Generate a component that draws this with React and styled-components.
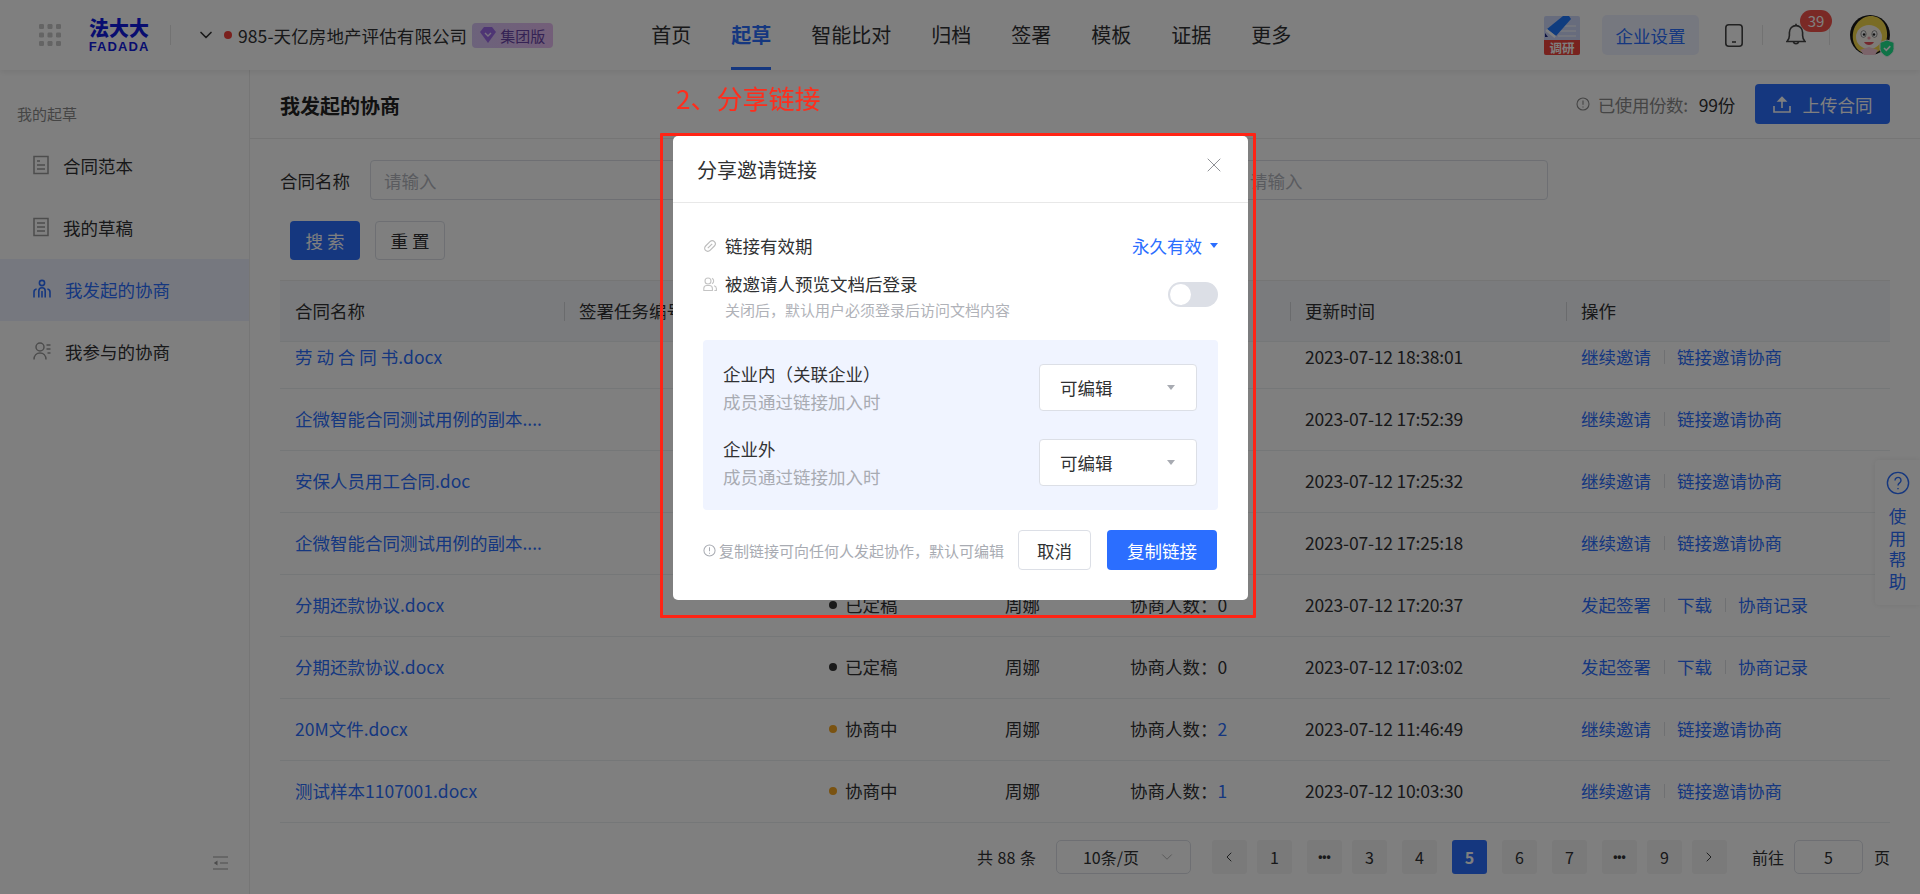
import React from "react";
import styled, { createGlobalStyle } from "styled-components";
import { ChevronDown, ChevronLeft, ChevronRight, X } from "lucide-react";

const FONT = `"Noto Sans CJK SC", "Noto Sans", sans-serif`;
const BLUE = "#2b6eff";

const GlobalStyle = createGlobalStyle`
  html, body {
    margin: 0;
    height: 100%;
    overflow: hidden;
    background: #fff;
    font-family: ${FONT};
    font-size: 17.5px;
    color: #303133;
  }
  #root { height: 100%; }
  * { box-sizing: border-box; }
`;

const Page = styled.div`
  width: 1920px;
  height: 894px;
  display: flex;
  flex-direction: column;
`;

/* top bar */
const TopBar = styled.header`
  height: 70px;
  flex: none;
  display: flex;
  align-items: center;
  padding-right: 30px;
  background: #fff;
  box-shadow: 0 2px 6px rgba(0, 0, 0, 0.08);
  position: relative;
  z-index: 1;
`;

const AppsIcon = styled.svg`
  width: 22px;
  height: 22px;
  margin-left: 39px;
  flex: none;
`;

const Logo = styled.div`
  margin-left: 28px;
  width: 60px;
  flex: none;
  display: flex;
  flex-direction: column;
  align-items: center;
  color: #111be0;
  font-weight: 900;
`;

const LogoCn = styled.span`
  font-size: 20px;
  line-height: 20px;
`;

const LogoEn = styled.span`
  margin-top: 3px;
  font-family: "Liberation Sans", sans-serif;
  font-size: 13px;
  line-height: 11px;
  font-weight: 700;
  letter-spacing: 1.1px;
  white-space: nowrap;
`;

const BarSep = styled.i`
  width: 1px;
  height: 20px;
  background: #e4e4e4;
  flex: none;
  margin-left: ${(p) => p.$ml || 0}px;
`;

const CompanyToggle = styled.span`
  margin-left: 25px;
  display: flex;
  color: #333;
`;

const CompanyDot = styled.i`
  width: 8px;
  height: 8px;
  border-radius: 50%;
  background: #f5403a;
  margin-left: 8px;
  flex: none;
`;

const CompanyName = styled.span`
  margin-left: 6px;
  white-space: nowrap;
  letter-spacing: 0.1px;
`;

const GroupBadge = styled.span`
  margin-left: 5px;
  width: 81px;
  height: 25px;
  flex: none;
  display: flex;
  align-items: center;
  justify-content: center;
  gap: 4px;
  border-radius: 4px;
  background: linear-gradient(90deg, #d9c6f7, #e7bdf2);
  color: #6a45a8;
  font-size: 15px;
`;

const Nav = styled.nav`
  margin-left: 98px;
  height: 70px;
  display: flex;
  gap: 40px;
`;

const NavItem = styled.a`
  display: flex;
  align-items: center;
  padding-top: 2px;
  font-size: 20px;
  border-bottom: 3px solid ${(p) => (p.$active ? BLUE : "transparent")};
  color: ${(p) => (p.$active ? BLUE : "#303133")};
  font-weight: ${(p) => (p.$active ? 700 : 400)};
`;

const BarRight = styled.div`
  margin-left: auto;
  display: flex;
  align-items: center;
`;

const SurveyBadge = styled.div`
  width: 36px;
  height: 39px;
  border-radius: 2px;
  overflow: hidden;
  display: flex;
  flex-direction: column;
  background: #cfd8fb;
`;

const SurveyLabel = styled.span`
  height: 15px;
  background: #f0453c;
  color: #fff;
  font-size: 12.5px;
  line-height: 15px;
  font-weight: 700;
  text-align: center;
  white-space: nowrap;
`;

const SettingsButton = styled.a`
  margin-left: 22px;
  width: 97px;
  height: 40px;
  display: flex;
  align-items: center;
  justify-content: center;
  border-radius: 5px;
  background: #edf1ff;
  color: ${BLUE};
`;

const BarIcon = styled.svg`
  flex: none;
  margin-left: ${(p) => p.$ml || 0}px;
`;

const BellWrap = styled.div`
  position: relative;
  display: flex;
  margin-left: 23px;
`;

const BellCount = styled.span`
  position: absolute;
  left: 14px;
  top: -13px;
  width: 32px;
  height: 22px;
  border-radius: 11px;
  background: #f5524a;
  color: #fff;
  font-size: 15px;
  line-height: 22px;
  text-align: center;
`;

const AvatarIcon = styled.svg`
  margin-left: 20px;
  flex: none;
  overflow: visible;
`;

/* page body */
const Body = styled.div`
  flex: 1;
  min-height: 0;
  display: flex;
`;

const Sidebar = styled.aside`
  width: 250px;
  flex: none;
  display: flex;
  flex-direction: column;
  border-right: 1px solid #ececec;
  padding: 34px 0 24px;
`;

const SideLabel = styled.div`
  padding-left: 17px;
  margin-bottom: 11px;
  font-size: 15px;
  line-height: 20px;
  color: #8a8a8a;
`;

const SideItem = styled.a`
  height: 62px;
  display: flex;
  align-items: center;
  gap: 14px;
  padding: 0 0 2px 33px;
  background: ${(p) => (p.$active ? "#edf1ff" : "transparent")};
  color: ${(p) => (p.$active ? BLUE : "#303133")};
`;

const CollapseIcon = styled.svg`
  margin-top: auto;
  margin-left: 213px;
`;

const Main = styled.main`
  flex: 1;
  min-width: 0;
  display: flex;
  flex-direction: column;
`;

const MainHead = styled.div`
  height: 69px;
  flex: none;
  display: flex;
  align-items: center;
  justify-content: space-between;
  padding: 0 30px;
  border-bottom: 1px solid #ebebeb;
`;

const MainTitle = styled.h1`
  margin: 2px 0 0;
  font-size: 20px;
  font-weight: 700;
  color: #222;
`;

const HeadRight = styled.div`
  display: flex;
  align-items: center;
`;

const QuotaLabel = styled.span`
  margin-left: 8px;
  color: #8a8a8a;
  letter-spacing: -0.4px;
`;

const QuotaValue = styled.span`
  margin-left: 11px;
  margin-right: 20px;
  letter-spacing: -0.2px;
`;

const PrimaryButton = styled.button`
  height: ${(p) => p.$h || 40}px;
  width: ${(p) => p.$w}px;
  display: flex;
  align-items: center;
  justify-content: center;
  gap: 12px;
  padding: 0;
  border: 0;
  border-radius: 4px;
  background: ${BLUE};
  color: #fff;
  font: inherit;
`;

const GhostButton = styled.button`
  height: ${(p) => p.$h || 40}px;
  width: ${(p) => p.$w}px;
  padding: 0;
  border: 1px solid #dcdfe6;
  border-radius: 4px;
  background: #fff;
  color: #303133;
  font: inherit;
`;

const Filters = styled.div`
  padding: 21px 30px 0;
  flex: none;
`;

const FilterRow = styled.div`
  width: 1268px;
  display: flex;
  justify-content: space-between;
`;

const FilterField = styled.div`
  width: ${(p) => p.$w}px;
  display: flex;
  align-items: center;
`;

const FilterLabel = styled.span`
  width: 90px;
  flex: none;
  white-space: nowrap;
`;

const TextBox = styled.div`
  flex: 1;
  height: 40px;
  display: flex;
  align-items: center;
  padding-left: 13px;
  border: 1px solid #dcdfe6;
  border-radius: 4px;
  color: #b4b7be;
`;

const FilterActions = styled.div`
  display: flex;
  gap: 15px;
  margin-top: 21px;
  padding-left: 10px;
`;

const TableWrap = styled.div`
  margin: 20px 30px 0;
  flex: none;
  border-top: 1px solid #ebebeb;
`;

const COLUMNS = "284px 250px 176px 125px 175px 276px 324px";

const TableHead = styled.div`
  height: 61px;
  display: grid;
  grid-template-columns: ${COLUMNS};
  align-items: center;
  background: #f5f7fa;
  border-bottom: 1px solid #ebeef0;
`;

const HeadCell = styled.div`
  position: relative;
  padding: 0 0 2px 15px;
  white-space: nowrap;
  overflow: hidden;
  ${(p) =>
    p.$sep &&
    `&::before {
      content: "";
      position: absolute;
      left: 0;
      top: 4px;
      bottom: 4px;
      width: 1px;
      background: #d5d7da;
    }`}
`;

const TableBody = styled.div`
  height: 481px;
  overflow: hidden;
`;

const TableRows = styled.div`
  margin-top: -15px;
`;

const TableRow = styled.div`
  height: 62px;
  display: grid;
  grid-template-columns: ${COLUMNS};
  align-items: center;
  border-bottom: 1px solid #ebeef0;
`;

const Cell = styled.div`
  padding: 0 0 2px 15px;
  display: flex;
  align-items: center;
  white-space: nowrap;
`;

const TimeCell = styled(Cell)`
  letter-spacing: -0.2px;
`;

const FileLink = styled.a`
  color: ${BLUE};
`;

const StatusDot = styled.i`
  width: 8px;
  height: 8px;
  border-radius: 50%;
  margin-right: 8px;
  background: ${(p) => (p.$ongoing ? "#f5a623" : "#333")};
`;

const CountNumber = styled.span`
  color: ${(p) => (p.$link ? BLUE : "inherit")};
`;

const ActionLink = styled.a`
  color: ${BLUE};
`;

const ActionSep = styled.i`
  width: 1px;
  height: 14px;
  margin: 0 12px 0 13px;
  background: #dfe1e4;
`;

/* pagination */
const Pager = styled.div`
  padding: 17px 30px 0;
  display: flex;
  align-items: center;
  justify-content: flex-end;
  font-size: 16px;
`;

const PagerTotal = styled.span`
  margin-right: 20px;
  word-spacing: 1px;
`;

const SizeSelect = styled.div`
  width: 135px;
  height: 34px;
  margin-right: 21px;
  display: flex;
  align-items: center;
  justify-content: space-between;
  padding: 0 14px 0 26px;
  border: 1px solid #dcdfe6;
  border-radius: 5px;
`;

const PageButton = styled.span`
  width: 35px;
  height: 34px;
  flex: none;
  margin-left: ${(p) => p.$ml ?? 10}px;
  display: flex;
  align-items: center;
  justify-content: center;
  border-radius: 3px;
  background: ${(p) => (p.$active ? BLUE : "#f4f4f5")};
  color: ${(p) => (p.$active ? "#fff" : "#303133")};
  font-weight: ${(p) => (p.$active ? 700 : 400)};
`;

const Dots = styled.span`
  font-family: "Liberation Sans", sans-serif;
  font-size: 12px;
  font-weight: 700;
`;

const JumpLabel = styled.span`
  margin-left: 25px;
`;

const JumpBox = styled.div`
  width: 69px;
  height: 34px;
  margin: 0 11px 0 10px;
  display: flex;
  align-items: center;
  justify-content: center;
  border: 1px solid #dcdfe6;
  border-radius: 5px;
`;

/* floating help */
const HelpTab = styled.div`
  position: absolute;
  right: 0;
  top: 460px;
  width: 45px;
  height: 145px;
  display: flex;
  flex-direction: column;
  align-items: center;
  padding-top: 11px;
  border-radius: 4px 0 0 4px;
  background: #fff;
  box-shadow: 0 0 6px rgba(0, 0, 0, 0.08);
  color: ${BLUE};
  font-size: 17.5px;
`;

const HelpText = styled.div`
  width: 18px;
  margin-top: 10px;
  line-height: 21.6px;
  text-align: center;
`;

/* dialog */
const Overlay = styled.div`
  position: fixed;
  inset: 0;
  background: rgba(0, 0, 0, 0.5);
  z-index: 10;
`;

const Annotation = styled.div`
  position: absolute;
  left: 676px;
  top: 80px;
  font-size: 26px;
  line-height: 36px;
  color: #ff2d1c;
  white-space: nowrap;
`;

const AnnotationFrame = styled.div`
  position: absolute;
  left: 660px;
  top: 133px;
  width: 596px;
  height: 485px;
  border: 3px solid #ff2415;
  border-radius: 1px;
`;

const Dialog = styled.div`
  position: absolute;
  left: 673px;
  top: 136px;
  width: 575px;
  height: 464px;
  border-radius: 5px;
  background: #fff;
`;

const DialogHead = styled.div`
  height: 67px;
  display: flex;
  align-items: center;
  justify-content: space-between;
  padding: 0 22px 0 24px;
  border-bottom: 1px solid #e8e8e8;
`;

const DialogTitle = styled.span`
  font-size: 20px;
  color: #303133;
`;

const CloseIcon = styled(X)`
  margin-bottom: 8px;
`;

const DialogBody = styled.div`
  padding: 30px 30px 0;
`;

const OptionRow = styled.div`
  display: flex;
  align-items: ${(p) => (p.$top ? "flex-start" : "center")};
  justify-content: space-between;
  min-height: 24px;
  margin-top: ${(p) => p.$mt || 0}px;
`;

const OptionLabel = styled.div`
  display: flex;
  align-items: center;
  gap: 8px;
  line-height: 24px;
`;

const OptionHint = styled.div`
  padding-left: 22px;
  margin-top: 3px;
  font-size: 15px;
  line-height: 22px;
  color: #b0b2b8;
`;

const ExpirySelect = styled.span`
  display: flex;
  align-items: center;
  gap: 8px;
  color: ${BLUE};
`;

const SmallCaret = styled.i`
  width: 0;
  height: 0;
  border-left: 4.5px solid transparent;
  border-right: 4.5px solid transparent;
  border-top: 5px solid ${(p) => p.$color};
`;

const Switch = styled.span`
  width: 50px;
  height: 25px;
  margin-top: 10px;
  padding: 2px;
  border-radius: 13px;
  background: #dcdfe6;
  display: flex;
`;

const SwitchKnob = styled.i`
  width: 21px;
  height: 21px;
  border-radius: 50%;
  background: #fff;
`;

const RolePanel = styled.div`
  margin-top: 19px;
  padding: 24px 21px 24px 20px;
  display: flex;
  flex-direction: column;
  gap: 28px;
  border-radius: 4px;
  background: #f0f4ff;
`;

const RoleRow = styled.div`
  height: 47px;
  display: flex;
  align-items: center;
  justify-content: space-between;
`;

const RoleText = styled.div`
  line-height: 24px;
`;

const RoleHint = styled.div`
  margin-top: 4px;
  color: #a8abb2;
`;

const RoleSelect = styled.div`
  width: 158px;
  height: 47px;
  display: flex;
  align-items: center;
  justify-content: space-between;
  padding: 0 21px 0 20px;
  border: 1px solid #dcdfe6;
  border-radius: 4px;
  background: #fff;
`;

const DialogFoot = styled.div`
  margin-top: 20px;
  padding-right: 1px;
  display: flex;
  align-items: center;
`;

const FootHint = styled.div`
  flex: 1;
  display: flex;
  align-items: center;
  gap: 3px;
  font-size: 15px;
  color: #a8abb2;
  white-space: nowrap;
`;

const FootActions = styled.div`
  display: flex;
  gap: 16px;
`;

const rows = [
  { name: "劳 动 合 同 书.docx", time: "2023-07-12 18:38:01" },
  { name: "企微智能合同测试用例的副本....", time: "2023-07-12 17:52:39" },
  { name: "安保人员用工合同.doc", time: "2023-07-12 17:25:32" },
  { name: "企微智能合同测试用例的副本....", time: "2023-07-12 17:25:18" },
  { name: "分期还款协议.docx", state: "已定稿", count: 0, time: "2023-07-12 17:20:37" },
  { name: "分期还款协议.docx", state: "已定稿", count: 0, time: "2023-07-12 17:03:02" },
  { name: "20M文件.docx", state: "协商中", count: 2, time: "2023-07-12 11:46:49" },
  { name: "测试样本1107001.docx", state: "协商中", count: 1, time: "2023-07-12 10:03:30" },
];

const navItems = ["首页", "起草", "智能比对", "归档", "签署", "模板", "证据", "更多"];

function DocIcon({ lines = 3 }) {
  return (
    <svg width="16" height="20" viewBox="0 0 16 20" fill="none" stroke="#9a9a9a" strokeWidth="1.5">
      <rect x="1" y="1.5" width="14" height="17" />
      <path d={lines === 3 ? "M4 6h3M4 10h8M4 14h8" : "M4 6h8M4 10h8M4 14h8"} />
    </svg>
  );
}

function GroupIcon() {
  return (
    <svg width="18" height="20" viewBox="0 0 18 20" fill="none" stroke={BLUE} strokeWidth="1.6">
      <circle cx="9" cy="4" r="2.6" />
      <path d="M5.8 18.5v-6.5a3.2 3.2 0 0 1 6.4 0v6.5" />
      <path d="M1 18.5v-5.5a3 3 0 0 1 2.6-3M17 18.5v-5.5a3 3 0 0 0-2.6-3" />
      <path d="M9 12v6.5" />
    </svg>
  );
}

function PartnerIcon() {
  return (
    <svg width="18" height="20" viewBox="0 0 18 20" fill="none" stroke="#9a9a9a" strokeWidth="1.5">
      <circle cx="7" cy="6" r="4" />
      <path d="M1 18.5c0-4 2.6-6.5 6-6.5s6 2.5 6 6.5" />
      <path d="M13.5 4h4M13.5 8h4M14.5 12h3" />
    </svg>
  );
}

function LinkIcon() {
  return (
    <svg width="14" height="14" viewBox="0 0 14 14" fill="none" stroke="#bdbdbd" strokeWidth="1.2">
      <rect x="0.8" y="3.9" width="12.4" height="6.2" rx="3.1" transform="rotate(-45 7 7)" />
      <path d="M4.8 9.2l4.4-4.4" />
    </svg>
  );
}

function UsersIcon() {
  return (
    <svg width="14" height="16" viewBox="0 0 14 16" fill="none" stroke="#c4c4c4" strokeWidth="1.1">
      <circle cx="5" cy="5" r="3" />
      <path d="M9 2.3a3 3 0 0 1 0 5.4" />
      <path d="M0.8 14.5v-2a3 3 0 0 1 3-3h2.6a3 3 0 0 1 3 3v2z" />
      <path d="M11 9.7a3 3 0 0 1 2.4 2.8v2h-2" />
    </svg>
  );
}

function InfoIcon({ size, color }) {
  return (
    <svg width={size} height={size} viewBox="0 0 14 14" fill="none" stroke={color} strokeWidth="1.1">
      <circle cx="7" cy="7" r="6" />
      <path d="M7 3.6v4.2M7 9.4v1" />
    </svg>
  );
}

function Avatar() {
  return (
    <AvatarIcon width="40" height="40" viewBox="0 0 40 40">
      <circle cx="20" cy="20" r="20" fill="#171717" />
      <path d="M3 25C1 11 11 1 21 1c10 0 17 9 16 21-1 9-8 17-17 17S5 34 3 25z" fill="#f5d94a" />
      <ellipse cx="19" cy="22" rx="13" ry="12" fill="#fdf6ef" />
      <ellipse cx="13.5" cy="19" rx="2.6" ry="3.4" fill="#fff" stroke="#555" strokeWidth="0.6" />
      <ellipse cx="24.5" cy="19" rx="2.6" ry="3.4" fill="#fff" stroke="#555" strokeWidth="0.6" />
      <circle cx="14" cy="19.5" r="1.2" fill="#222" />
      <circle cx="24" cy="19.5" r="1.2" fill="#222" />
      <circle cx="19" cy="23" r="1.6" fill="#f0a0a8" />
      <path d="M14 27c2 4 8 4 10 0z" fill="#e8505b" />
      <path d="M10 35l9-3 9 3-3 5H14z" fill="#f7c9d4" />
      <path d="M37 25l7 2.5v6c0 4-3.5 6.5-7 8.5-3.5-2-7-4.5-7-8.5v-6z" fill="#1ee68e" stroke="#f2f2f2" strokeWidth="1" />
      <path d="M34 33l2.3 2.3 4-4.2" fill="none" stroke="#fff" strokeWidth="1.6" />
    </AvatarIcon>
  );
}

function Actions({ final }) {
  if (final) {
    return (
      <Cell>
        <ActionLink>发起签署</ActionLink>
        <ActionSep />
        <ActionLink>下载</ActionLink>
        <ActionSep />
        <ActionLink>协商记录</ActionLink>
      </Cell>
    );
  }
  return (
    <Cell>
      <ActionLink>继续邀请</ActionLink>
      <ActionSep />
      <ActionLink>链接邀请协商</ActionLink>
    </Cell>
  );
}

function RoleLine({ title }) {
  return (
    <RoleRow>
      <RoleText>
        <div>{title}</div>
        <RoleHint>成员通过链接加入时</RoleHint>
      </RoleText>
      <RoleSelect>
        可编辑
        <SmallCaret $color="#a8abb2" />
      </RoleSelect>
    </RoleRow>
  );
}

export default function App() {
  return (
    <>
      <GlobalStyle />
      <Page>
        <TopBar>
          <AppsIcon viewBox="0 0 22 22" fill="#c8c8c8">
            {[0, 8.5, 17].map((y) =>
              [0, 8.5, 17].map((x) => <rect key={`${x}-${y}`} x={x} y={y} width="5" height="5" rx="1.2" />)
            )}
          </AppsIcon>
          <Logo>
            <LogoCn>法大大</LogoCn>
            <LogoEn>FADADA</LogoEn>
          </Logo>
          <BarSep $ml={21} />
          <CompanyToggle>
            <ChevronDown size={20} strokeWidth={2} />
          </CompanyToggle>
          <CompanyDot />
          <CompanyName>985-天亿房地产评估有限公司</CompanyName>
          <GroupBadge>
            <svg width="16" height="18" viewBox="0 0 16 18">
              <path d="M4 1h8l4 5-8 11L0 6z" fill="#9d6be8" />
              <path d="M5 7l3 3 3-3" fill="none" stroke="#f0e2ff" strokeWidth="1.4" />
            </svg>
            集团版
          </GroupBadge>
          <Nav>
            {navItems.map((n) => (
              <NavItem key={n} $active={n === "起草"}>
                {n}
              </NavItem>
            ))}
          </Nav>
          <BarRight>
            <SurveyBadge>
              <svg width="36" height="24" viewBox="0 0 36 24">
                <path d="M14 10h18M16 15h16M14 20h18" stroke="#fff" strokeWidth="1" />
                <path d="M19 0h6l2 3-15 17-9-7z" fill="#1f78ff" />
                <path d="M3 13l9 7-1.5 2-9-7z" fill="#fff" />
                <path d="M1 17l3 4H1z" fill="#1a237e" />
              </svg>
              <SurveyLabel>调研</SurveyLabel>
            </SurveyBadge>
            <SettingsButton>企业设置</SettingsButton>
            <BarIcon $ml={26} width="18" height="23" viewBox="0 0 18 23" fill="none" stroke="#444" strokeWidth="1.6">
              <rect x="0.8" y="0.8" width="16.4" height="21.4" rx="3" />
              <path d="M7 18h4" />
            </BarIcon>
            <BarSep $ml={19} />
            <BellWrap>
              <BarIcon width="20" height="24" viewBox="0 0 20 24" fill="none" stroke="#444" strokeWidth="1.6">
                <path d="M1 18.5h18c-1.6-1.6-2.4-3.4-2.4-6V9.4C16.6 5.4 13.6 2.6 10 2.6S3.4 5.4 3.4 9.4v3.1c0 2.6-.8 4.4-2.4 6z" />
                <path d="M10 .8v1.8" />
                <path d="M7.4 18.8a2.7 2.7 0 0 0 5.2 0" />
              </BarIcon>
              <BellCount>39</BellCount>
            </BellWrap>
            <BarSep $ml={23} />
            <Avatar />
          </BarRight>
        </TopBar>

        <Body>
          <Sidebar>
            <SideLabel>我的起草</SideLabel>
            <SideItem>
              <DocIcon />
              合同范本
            </SideItem>
            <SideItem>
              <DocIcon lines={4} />
              我的草稿
            </SideItem>
            <SideItem $active>
              <GroupIcon />
              我发起的协商
            </SideItem>
            <SideItem>
              <PartnerIcon />
              我参与的协商
            </SideItem>
            <CollapseIcon width="15" height="14" viewBox="0 0 15 14" fill="none" stroke="#999" strokeWidth="1.2">
              <path d="M0 1h15M7 7h8M0 13h15" />
              <path d="M4.5 4.5v5L0.8 7z" fill="#999" stroke="none" />
            </CollapseIcon>
          </Sidebar>

          <Main>
            <MainHead>
              <MainTitle>我发起的协商</MainTitle>
              <HeadRight>
                <InfoIcon size={14} color="#8a8a8a" />
                <QuotaLabel>已使用份数:</QuotaLabel>
                <QuotaValue>99份</QuotaValue>
                <PrimaryButton $w={135}>
                  <svg width="18" height="17" viewBox="0 0 18 17" fill="none" stroke="#fff" strokeWidth="1.6">
                    <path d="M1 10v6h16v-6" />
                    <path d="M9 12V2" />
                    <path d="M5.5 5L9 1.5 12.5 5z" fill="#fff" />
                  </svg>
                  上传合同
                </PrimaryButton>
              </HeadRight>
            </MainHead>

            <Filters>
              <FilterRow>
                <FilterField $w={402}>
                  <FilterLabel>合同名称</FilterLabel>
                  <TextBox>请输入</TextBox>
                </FilterField>
                <FilterField $w={312}>
                  <TextBox>请输入</TextBox>
                </FilterField>
              </FilterRow>
              <FilterActions>
                <PrimaryButton $w={70} $h={39}>搜 索</PrimaryButton>
                <GhostButton $w={70} $h={39}>重 置</GhostButton>
              </FilterActions>
            </Filters>

            <TableWrap>
              <TableHead>
                <HeadCell>合同名称</HeadCell>
                <HeadCell $sep>签署任务编号</HeadCell>
                <HeadCell />
                <HeadCell />
                <HeadCell />
                <HeadCell $sep>更新时间</HeadCell>
                <HeadCell $sep>操作</HeadCell>
              </TableHead>
              <TableBody>
                <TableRows>
                  {rows.map((r, i) => (
                    <TableRow key={i}>
                      <Cell>
                        <FileLink>{r.name}</FileLink>
                      </Cell>
                      <Cell />
                      <Cell>
                        {r.state && <StatusDot $ongoing={r.state === "协商中"} />}
                        {r.state}
                      </Cell>
                      <Cell>{r.state && "周娜"}</Cell>
                      <Cell>
                        {r.state && (
                          <>
                            协商人数：<CountNumber $link={r.count > 0}>{r.count}</CountNumber>
                          </>
                        )}
                      </Cell>
                      <TimeCell>{r.time}</TimeCell>
                      <Actions final={r.state === "已定稿"} />
                    </TableRow>
                  ))}
                </TableRows>
              </TableBody>
            </TableWrap>

            <Pager>
              <PagerTotal>共 88 条</PagerTotal>
              <SizeSelect>
                10条/页
                <ChevronDown size={18} strokeWidth={1} color="#999" />
              </SizeSelect>
              <PageButton $ml={0}>
                <ChevronLeft size={16} strokeWidth={1.4} />
              </PageButton>
              <PageButton>1</PageButton>
              <PageButton $ml={15}>
                <Dots>•••</Dots>
              </PageButton>
              <PageButton>3</PageButton>
              <PageButton $ml={15}>4</PageButton>
              <PageButton $ml={15} $active>5</PageButton>
              <PageButton $ml={15}>6</PageButton>
              <PageButton $ml={15}>7</PageButton>
              <PageButton $ml={15}>
                <Dots>•••</Dots>
              </PageButton>
              <PageButton>9</PageButton>
              <PageButton>
                <ChevronRight size={16} strokeWidth={1.4} />
              </PageButton>
              <JumpLabel>前往</JumpLabel>
              <JumpBox>5</JumpBox>
              <span>页</span>
            </Pager>
          </Main>
        </Body>

        <HelpTab>
          <svg width="24" height="24" viewBox="0 0 24 24" fill="none" stroke={BLUE} strokeWidth="1.4">
            <circle cx="12" cy="12" r="10.6" />
            <path d="M9 9.4a3 3 0 1 1 4.6 2.5c-1 .7-1.6 1.3-1.6 2.6M12 17v1.2" />
          </svg>
          <HelpText>使用帮助</HelpText>
        </HelpTab>
      </Page>

      <Overlay>
        <Annotation>2、分享链接</Annotation>
        <AnnotationFrame />
        <Dialog>
          <DialogHead>
            <DialogTitle>分享邀请链接</DialogTitle>
            <CloseIcon size={24} strokeWidth={1} color="#8f9196" />
          </DialogHead>
          <DialogBody>
            <OptionRow>
              <OptionLabel>
                <LinkIcon />
                链接有效期
              </OptionLabel>
              <ExpirySelect>
                永久有效
                <SmallCaret $color={BLUE} />
              </ExpirySelect>
            </OptionRow>
            <OptionRow $top $mt={14}>
              <div>
                <OptionLabel>
                  <UsersIcon />
                  被邀请人预览文档后登录
                </OptionLabel>
                <OptionHint>关闭后，默认用户必须登录后访问文档内容</OptionHint>
              </div>
              <Switch>
                <SwitchKnob />
              </Switch>
            </OptionRow>
            <RolePanel>
              <RoleLine title="企业内（关联企业）" />
              <RoleLine title="企业外" />
            </RolePanel>
            <DialogFoot>
              <FootHint>
                <InfoIcon size={13} color="#a8abb2" />
                复制链接可向任何人发起协作，默认可编辑
              </FootHint>
              <FootActions>
                <GhostButton $w={73}>取消</GhostButton>
                <PrimaryButton $w={110}>复制链接</PrimaryButton>
              </FootActions>
            </DialogFoot>
          </DialogBody>
        </Dialog>
      </Overlay>
    </>
  );
}
